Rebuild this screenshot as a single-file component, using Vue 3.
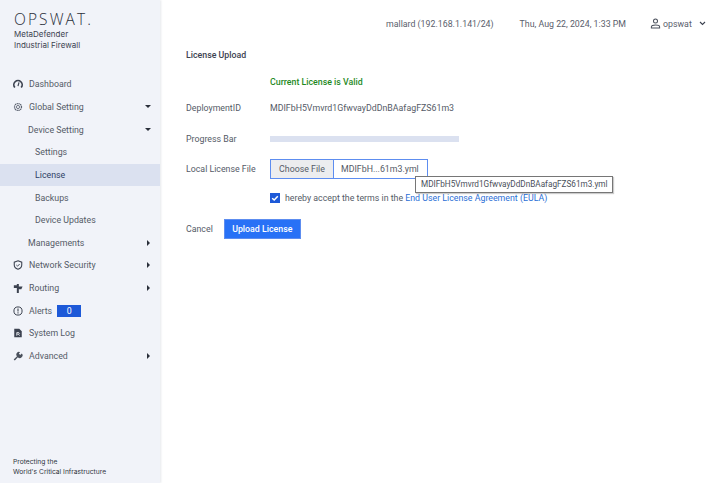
<script setup>
const navItems = [
  { label: 'Dashboard', icon: 'dash', level: 0 },
  { label: 'Global Setting', icon: 'gear', level: 0, arrow: 'down' },
  { label: 'Device Setting', level: 1, arrow: 'down' },
  { label: 'Settings', level: 2 },
  { label: 'License', level: 2, active: true },
  { label: 'Backups', level: 2 },
  { label: 'Device Updates', level: 2 },
  { label: 'Managements', level: 1, arrow: 'right' },
  { label: 'Network Security', icon: 'shield', level: 0, arrow: 'right' },
  { label: 'Routing', icon: 'sign', level: 0, arrow: 'right' },
  { label: 'Alerts', icon: 'alert', level: 0, badge: 0 },
  { label: 'System Log', icon: 'log', level: 0 },
  { label: 'Advanced', icon: 'wrench', level: 0, arrow: 'right' }
];
</script>

<template>
  <div class="page">
    <aside class="sidebar">
      <div class="brand">
        <div class="logo">OPSWAT.</div>
        <div class="product">MetaDefender<br>Industrial Firewall</div>
      </div>
      <nav class="nav">
        <div
          v-for="item in navItems"
          :key="item.label"
          class="nav-row"
          :class="['level-' + item.level, { active: item.active }]"
        >
          <span v-if="item.level === 0" class="nav-icon">
            <svg v-if="item.icon === 'dash'" viewBox="0 0 12 12" width="10" height="10">
              <path d="M2.2 10.2A5 5 0 1 1 9.8 10.2" fill="none" stroke="#3c4250" stroke-width="2" />
              <path d="M6 8.5L7.2 4" stroke="#3c4250" stroke-width="1.4" />
            </svg>
            <svg v-else-if="item.icon === 'gear'" viewBox="0 0 12 12" width="10" height="10">
              <circle cx="6" cy="6" r="4.2" fill="none" stroke="#5b6270" stroke-width="1.5" stroke-dasharray="1.6 .6" />
              <circle cx="6" cy="6" r="1.9" fill="none" stroke="#5b6270" stroke-width="1" />
            </svg>
            <svg v-else-if="item.icon === 'shield'" viewBox="0 0 12 12" width="10" height="10">
              <path d="M6 1L10.5 2.6V6C10.5 8.5 8.5 10.3 6 11C3.5 10.3 1.5 8.5 1.5 6V2.6Z" fill="none" stroke="#3c4250" stroke-width="1.3" />
              <path d="M4 6L5.5 7.4L8 4.8" fill="none" stroke="#3c4250" stroke-width="1.1" />
            </svg>
            <svg v-else-if="item.icon === 'sign'" viewBox="0 0 12 12" width="10" height="11">
              <path d="M4.6 0.5H7V11.5H4.6Z M1 2H4.6V5.4H1Z M7 3.5H11.5L10 6.8H7Z" fill="#3c4250" />
            </svg>
            <svg v-else-if="item.icon === 'alert'" viewBox="0 0 12 12" width="10" height="10">
              <circle cx="6" cy="6" r="4.9" fill="none" stroke="#3c4250" stroke-width="1.2" />
              <path d="M6 3V6.6M6 7.6V9" stroke="#3c4250" stroke-width="1.3" />
            </svg>
            <svg v-else-if="item.icon === 'log'" viewBox="0 0 12 12" width="10" height="10">
              <path d="M1.5 .8H7.5L10.5 3.8V11.2H1.5Z" fill="#3c4250" />
              <path d="M4.5 9.2V5.5H7L7.8 6.3L6.9 7.3H4.8M6.4 7.3L7.9 9.2" fill="none" stroke="#f1f3f9" stroke-width="1" />
            </svg>
            <svg v-else viewBox="0 0 12 12" width="10" height="10">
              <path d="M.8 10.2L4.8 6.4A3.2 3.2 0 0 1 8.6 1.4L7 3.1L8.6 4.8L10.6 3A3.2 3.2 0 0 1 5.8 7.4L2.2 11.4Z" fill="#4a505c" />
            </svg>
          </span>
          <span class="nav-label">{{ item.label }}</span>
          <span v-if="item.badge !== undefined" class="badge">{{ item.badge }}</span>
          <span v-if="item.arrow" class="arrow" :class="item.arrow"></span>
        </div>
      </nav>
      <div class="tagline">Protecting the<br>World's Critical Infrastructure</div>
    </aside>

    <main class="main">
      <header class="topbar">
        <span class="host">mallard (192.168.1.141/24)</span>
        <span class="clock">Thu, Aug 22, 2024, 1:33 PM</span>
        <span class="user">
          <svg viewBox="0 0 12 12" width="11" height="11">
            <circle cx="6" cy="3.3" r="2.2" fill="none" stroke="#4a505c" stroke-width="1.1" />
            <path d="M1.5 11V9.6C1.5 8.3 3 7.6 6 7.6S10.5 8.3 10.5 9.6V11Z" fill="none" stroke="#4a505c" stroke-width="1.1" />
          </svg>
          <span>opswat</span>
          <svg class="chev" viewBox="0 0 8 6" width="7" height="5">
            <path d="M1 1.2L4 4.2L7 1.2" fill="none" stroke="#3c4250" stroke-width="1.3" />
          </svg>
        </span>
      </header>

      <section class="content">
        <h1 class="title">License Upload</h1>
        <div class="form-row status-row">
          <span></span>
          <span class="valid">Current License is Valid</span>
        </div>
        <div class="form-row id-row">
          <span>DeploymentID</span>
          <span>MDIFbH5Vmvrd1GfwvayDdDnBAafagFZS61m3</span>
        </div>
        <div class="form-row progress-row">
          <span>Progress Bar</span>
          <div class="progress"></div>
        </div>
        <div class="form-row file-row">
          <span>Local License File</span>
          <div class="file-wrap">
            <div class="file-input">
              <span class="file-btn">Choose File</span>
              <span class="file-name">MDIFbH...61m3.yml</span>
            </div>
            <div class="tooltip">MDIFbH5Vmvrd1GfwvayDdDnBAafagFZS61m3.yml</div>
          </div>
        </div>
        <div class="form-row accept-row">
          <span></span>
          <label class="accept">
            <span class="check">
              <svg viewBox="0 0 10 10" width="10" height="10">
                <path d="M2.2 5.2L4.2 7L7.8 3.2" fill="none" stroke="#fff" stroke-width="1.5" />
              </svg>
            </span>
            <span>hereby accept the terms in the <span class="link">End User License Agreement (EULA)</span></span>
          </label>
        </div>
        <div class="actions">
          <span class="cancel">Cancel</span>
          <button class="upload">Upload License</button>
        </div>
      </section>
    </main>
  </div>
</template>

<style>
html, body {
  margin: 0;
  background: #fff;
}
</style>

<style scoped>
.page {
  display: flex;
  width: 721px;
  height: 483px;
  overflow: hidden;
  font-family: Roboto, "Liberation Sans", sans-serif;
  font-size: 8.8px;
  color: #555b67;
}

.sidebar {
  width: 160px;
  flex-shrink: 0;
  display: flex;
  flex-direction: column;
  background: #f1f3f9;
  box-shadow: 1px 0 2px rgba(90, 100, 130, 0.15);
}

.brand {
  padding: 12px 0 0 14px;
  height: 61px;
}

.logo {
  font-family: "Open Sans", sans-serif;
  font-size: 15.5px;
  font-weight: 300;
  line-height: 15px;
  letter-spacing: 2.1px;
  color: #2a2f3a;
}

.product {
  margin-top: 2px;
  font-family: Inter, sans-serif;
  font-size: 8px;
  line-height: 10.5px;
  color: #3c4250;
}

.nav {
  flex: 1;
}

.nav-row {
  display: flex;
  align-items: center;
  height: 22.65px;
  padding-right: 10px;
}

.level-0 {
  padding-left: 13px;
}

.level-1 {
  padding-left: 28px;
}

.level-2 {
  padding-left: 35px;
}

.active {
  background: #dbe1f0;
  color: #2e3f66;
}

.nav-icon {
  display: flex;
  width: 16px;
}

.badge {
  margin-left: 5px;
  width: 24px;
  height: 12px;
  line-height: 12px;
  text-align: center;
  color: #fff;
  background: #1d59d8;
}

.arrow {
  margin-left: auto;
  width: 0;
  height: 0;
}

.arrow.down {
  margin-right: -1px;
  border-left: 3px solid transparent;
  border-right: 3px solid transparent;
  border-top: 3px solid #2a2f3a;
}

.arrow.right {
  border-top: 3px solid transparent;
  border-bottom: 3px solid transparent;
  border-left: 3px solid #2a2f3a;
}

.tagline {
  padding: 0 0 6px 13px;
  font-family: Inter, sans-serif;
  font-size: 6.7px;
  line-height: 10px;
  color: #2f3440;
}

.main {
  flex: 1;
  min-width: 0;
}

.topbar {
  display: flex;
  align-items: center;
  height: 47px;
  padding-left: 226px;
  white-space: nowrap;
  color: #5a606c;
}

.clock {
  margin-left: 26px;
}

.user {
  display: flex;
  align-items: center;
  gap: 2px;
  margin-left: 24px;
}

.chev {
  margin-left: 5px;
}

.content {
  padding: 0 0 0 26px;
}

.title {
  margin: 2px 0 0;
  font-size: 8.8px;
  line-height: 12px;
  font-weight: 500;
  color: #3c4250;
}

.form-row {
  display: grid;
  grid-template-columns: 84px 1fr;
  align-items: center;
}

.status-row {
  margin-top: 16px;
}

.valid {
  font-weight: 500;
  color: #1f8a1f;
}

.id-row {
  margin-top: 16px;
}

.progress-row {
  margin-top: 21px;
}

.progress {
  width: 189px;
  height: 6px;
  background: #dbe1f0;
}

.file-row {
  margin-top: 15px;
}

.file-wrap {
  position: relative;
}

.file-input {
  display: inline-flex;
  height: 20px;
  border: 1px solid #5d8df0;
  box-sizing: border-box;
  width: 158px;
  vertical-align: top;
}

.file-btn {
  width: 62px;
  line-height: 18px;
  text-align: center;
  background: #ecedef;
  border-right: 1px solid #5d8df0;
}

.file-name {
  padding-left: 7px;
  line-height: 18px;
}

.tooltip {
  position: absolute;
  left: 145px;
  top: 17px;
  box-sizing: border-box;
  width: 198px;
  padding: 0 5px;
  height: 17px;
  line-height: 15px;
  font-size: 8.2px;
  background: #fff;
  border: 1px solid #767676;
  box-shadow: 1px 1px 1px rgba(0, 0, 0, 0.2);
  color: #4a4f5a;
  white-space: nowrap;
}

.accept-row {
  margin-top: 14px;
}

.accept {
  display: flex;
  align-items: center;
  gap: 5px;
}

.check {
  display: flex;
  width: 10px;
  height: 10px;
  background: #1d59d8;
}

.link {
  color: #2b6fd6;
}

.actions {
  display: flex;
  align-items: center;
  gap: 11px;
  margin-top: 16px;
}

.upload {
  width: 77px;
  height: 20px;
  padding: 0;
  font: 500 8.8px Roboto, sans-serif;
  color: #fff;
  background: #2871f6;
  border: 1px solid #5d8df0;
}
</style>
